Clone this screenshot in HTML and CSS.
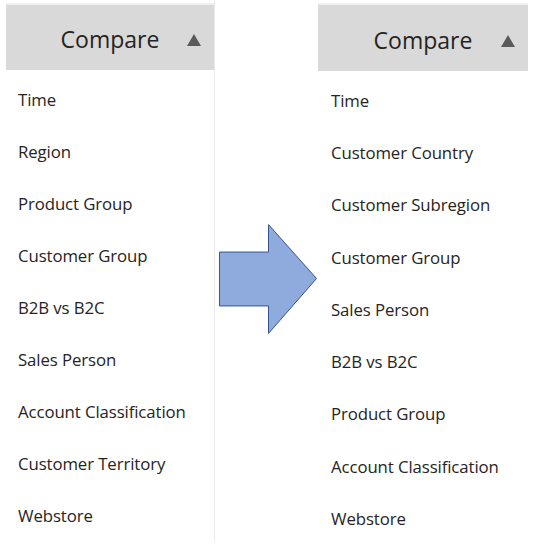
FILE: index.html
```html
<!DOCTYPE html>
<html>
<head>
<meta charset="utf-8">
<link rel="stylesheet" href="styles.css">
</head>
<body>
<div class="page">
  <div class="panel panel-left">
    <div class="header">
      <span class="spacer"></span>
      <span class="title">Compare</span>
      <span class="caret"><svg width="14" height="12" viewBox="0 0 14 12"><polygon points="7,0 14,12 0,12" fill="#5a5a5a"/></svg></span>
    </div>
    <ul class="list list-left">
      <li>Time</li>
      <li>Region</li>
      <li>Product Group</li>
      <li>Customer Group</li>
      <li>B2B vs B2C</li>
      <li>Sales Person</li>
      <li>Account Classification</li>
      <li>Customer Territory</li>
      <li>Webstore</li>
    </ul>
  </div>
  <div class="gap">
    <svg class="arrow" width="101" height="113" viewBox="0 0 101 113">
      <polygon points="0.5,28.5 50.5,28.5 50.5,0.5 99.5,55.5 50.5,111.5 50.5,83.5 0.5,83.5" fill="#8faadc" stroke="#2f528f" stroke-width="1"/>
    </svg>
  </div>
  <div class="panel panel-right">
    <div class="header">
      <span class="spacer"></span>
      <span class="title">Compare</span>
      <span class="caret"><svg width="14" height="12" viewBox="0 0 14 12"><polygon points="7,0 14,12 0,12" fill="#5a5a5a"/></svg></span>
    </div>
    <ul class="list list-right">
      <li>Time</li>
      <li>Customer Country</li>
      <li>Customer Subregion</li>
      <li>Customer Group</li>
      <li>Sales Person</li>
      <li>B2B vs B2C</li>
      <li>Product Group</li>
      <li>Account Classification</li>
      <li>Webstore</li>
    </ul>
  </div>
</div>
</body>
</html>
```

FILE: styles.css
```css
html, body {
  margin: 0;
  padding: 0;
  background: #ffffff;
}
body {
  font-family: "Open Sans", "Noto Sans", sans-serif;
  color: #252423;
}
.page {
  display: flex;
  align-items: flex-start;
  height: 544px;
}
.panel {
  display: flex;
  flex-direction: column;
  padding-top: 3px;
}
.panel-left {
  margin-left: 6px;
  width: 208px;
  height: 539px;
  border-right: 1px solid #ebebeb;
}
.panel-right {
  width: 210px;
}
.header {
  height: 66px;
  background: #d9d9d9;
  border-top: 2px solid #efefef;
  display: grid;
  grid-template-columns: 1fr auto 1fr;
  align-items: center;
}
.title {
  font-size: 23px;
  color: #252423;
  padding-top: 3px;
}
.caret {
  justify-self: end;
  padding-right: 13px;
  display: flex;
  padding-top: 5px;
}
.list {
  list-style: none;
  margin: 0;
  padding: 3px 0 0 12px;
}
.list li {
  font-size: 16.8px;
  display: flex;
  align-items: center;
  letter-spacing: -0.1px;
}
.list-left li {
  height: 52.1px;
}
.list-right li {
  height: 52.3px;
}
.list-right {
  padding-left: 13px;
}
.gap {
  width: 103px;
  display: flex;
  padding-top: 223px;
  padding-left: 4px;
  box-sizing: border-box;
}
.arrow {
  display: block;
}
```
